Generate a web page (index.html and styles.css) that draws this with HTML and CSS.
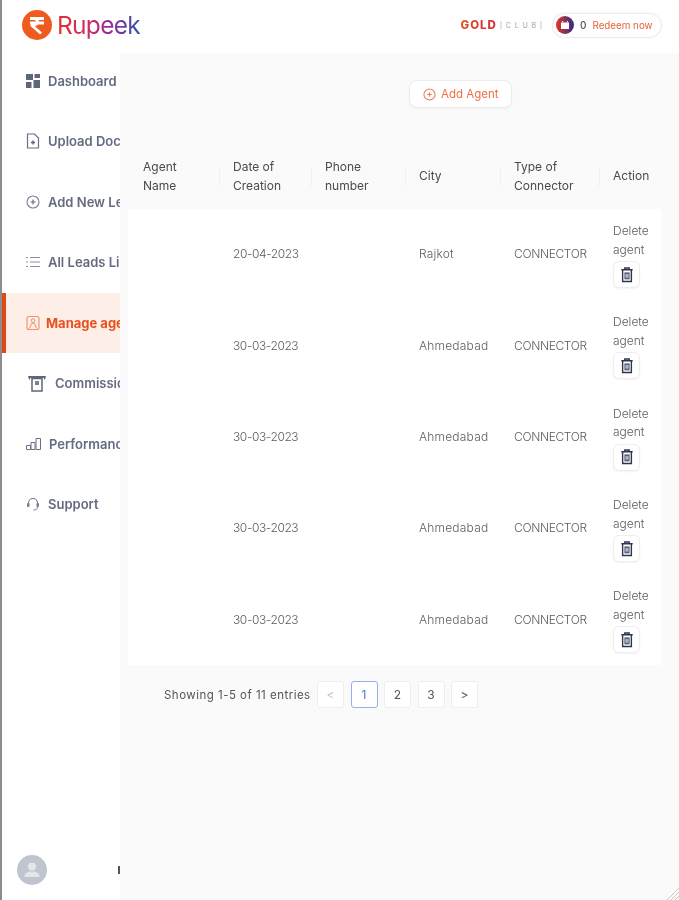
FILE: index.html
```html
<!DOCTYPE html>
<html lang="en">
<head>
<meta charset="utf-8">
<title>Rupeek - Manage agents</title>
<link rel="stylesheet" href="styles.css">
</head>
<body>
<svg class="defs" width="0" height="0" aria-hidden="true">
  <symbol id="trash" viewBox="0 0 16 18">
    <path d="M5.500 2.500V1h5v1.500M1.500 3h13M3 3.500V16.500h10V3.500" fill="none" stroke="#2d3550" stroke-width="1.600"/>
    <path d="M5 6h6v8H5z" fill="#5a6178"/>
    <path d="M7 8v4M9 8v4" stroke="#fff" stroke-width="1"/>
  </symbol>
</svg>
<div class="app">
  <header class="topbar">
    <div class="logo">
      <svg class="logo-mark" viewBox="0 0 30 30" aria-hidden="true">
        <circle cx="15" cy="15" r="15" fill="#ef5a1f"/>
        <path d="M8 8.500h14M8 13h14M10 8.500c7-.5 8 6.500 0 7l9 8" fill="none" stroke="#fff" stroke-width="2.800" stroke-linejoin="round"/>
      </svg>
      <span class="logo-text">Rupeek</span>
    </div>
    <div class="top-right">
      <div class="club"><span class="gold">GOLD</span><span class="club-word">| C L U B |</span></div>
      <div class="redeem">
        <svg class="redeem-icon" viewBox="0 0 18 18" aria-hidden="true">
          <defs><linearGradient id="rg" x1="0" x2="1" y1="0" y2="0"><stop offset="0" stop-color="#e8341f"/><stop offset="1" stop-color="#2a2f8f"/></linearGradient></defs>
          <circle cx="9" cy="9" r="9" fill="url(#rg)"/>
          <path d="M5 6.500h8V13H5z" fill="#fff"/>
          <path d="M7 6.500 6.500 5M11 6.500 11.500 5" stroke="#fff" stroke-width="1"/>
        </svg>
        <span class="points">0</span>
        <span class="redeem-link">Redeem now</span>
      </div>
    </div>
  </header>
  <div class="body-row">
    <nav class="sidebar">
      <ul class="nav">
        <li class="nav-item">
          <svg class="nav-icon" viewBox="0 0 14 14" aria-hidden="true"><path d="M0 0h7v6H0zM8.500 0H14v4H8.500zM0 8h5.500v6H0zM7.500 6H14v8H7.500z" fill="#5f667c"/></svg>
          <span class="nav-label">Dashboard</span>
        </li>
        <li class="nav-item">
          <svg class="nav-icon icon-tall" viewBox="0 0 14 16" aria-hidden="true"><path d="M1.500 1h7l4 4v10h-11z" fill="none" stroke="#6a7085" stroke-width="1.200"/><path d="M5 9.500h4M7 7.500v4" stroke="#5f667c" stroke-width="1.400"/></svg>
          <span class="nav-label">Upload Documents</span>
        </li>
        <li class="nav-item">
          <svg class="nav-icon" viewBox="0 0 14 14" aria-hidden="true"><circle cx="7" cy="7" r="6" fill="none" stroke="#7a8094" stroke-width="1.100"/><path d="M4.500 7h5M7 4.500v5" stroke="#5f667c" stroke-width="1.100"/></svg>
          <span class="nav-label">Add New Lead</span>
        </li>
        <li class="nav-item">
          <svg class="nav-icon" viewBox="0 0 14 12" aria-hidden="true"><path d="M4 1.500h10M4 6h10M4 10.500h10M0 1.500h2M0 6h2M0 10.500h2" stroke="#8a90a2" stroke-width="1.200"/></svg>
          <span class="nav-label">All Leads List</span>
        </li>
        <li class="nav-item is-active">
          <svg class="nav-icon icon-tall" viewBox="0 0 14 15" aria-hidden="true"><rect x="1" y="1" width="12" height="13" rx="2" fill="none" stroke="#f0906c" stroke-width="1.100"/><circle cx="7" cy="5" r="1.800" fill="none" stroke="#f0906c"/><path d="M3.500 13l2-5h3l2 5" fill="none" stroke="#f0906c"/></svg>
          <span class="nav-label">Manage agents</span>
        </li>
        <li class="nav-item">
          <svg class="nav-icon icon-wide" viewBox="0 0 20 17" aria-hidden="true"><path d="M1 1h18l-1 3.500h-1V3H3v1.500H2z" fill="#5f667c"/><path d="M5 3.500h10V16H5z" fill="none" stroke="#5f667c" stroke-width="1.500"/><rect x="8" y="6" width="4" height="4" fill="#7a8094"/></svg>
          <span class="nav-label">Commission</span>
        </li>
        <li class="nav-item">
          <svg class="nav-icon icon-perf" viewBox="0 0 15 12" aria-hidden="true"><path d="M.5 7.500h4v4h-4zM5 4.500h4v7H5zM10 .5h4.500v11H10z" fill="none" stroke="#6a7085"/></svg>
          <span class="nav-label">Performance</span>
        </li>
        <li class="nav-item">
          <svg class="nav-icon" viewBox="0 0 14 14" aria-hidden="true"><path d="M2.500 8V6a4.500 4.500 0 0 1 9 0v2" fill="none" stroke="#7a8094" stroke-width="1.200"/><rect x="1" y="6" width="2.500" height="4" rx="1" fill="#7a8094"/><rect x="10.500" y="6" width="2.500" height="4" rx="1" fill="#7a8094"/><path d="M11.500 10c0 2-2 3-4 3" fill="none" stroke="#7a8094"/></svg>
          <span class="nav-label">Support</span>
        </li>
      </ul>
      <div class="profile">
        <svg class="avatar" viewBox="0 0 30 30" aria-hidden="true"><circle cx="15" cy="15" r="15" fill="#c0c4cf"/><circle cx="15" cy="11.500" r="4" fill="#e4e6eb"/><path d="M7.500 22c0-4 3-5.500 7.500-5.500s7.500 1.500 7.500 5.500z" fill="#e4e6eb"/></svg>
        <span class="profile-mark"></span>
      </div>
    </nav>
    <main class="main">
      <div class="toolbar">
        <button class="add-btn" type="button">
          <svg class="add-icon" viewBox="0 0 14 14" aria-hidden="true"><circle cx="7" cy="7" r="6" fill="none" stroke="#ee7a52" stroke-width="1.100"/><path d="M4.500 7h5M7 4.500v5" stroke="#ee7a52" stroke-width="1.100"/></svg>
          Add Agent
        </button>
      </div>
      <table class="agents">
        <colgroup>
          <col class="c1"><col class="c2"><col class="c3"><col class="c4"><col class="c5"><col class="c6">
        </colgroup>
        <thead>
          <tr>
            <th>Agent<br>Name</th>
            <th><span class="th-sep"></span>Date of<br>Creation</th>
            <th><span class="th-sep"></span>Phone<br>number</th>
            <th><span class="th-sep"></span>City</th>
            <th><span class="th-sep"></span>Type of<br>Connector</th>
            <th><span class="th-sep"></span>Action</th>
          </tr>
        </thead>
        <tbody>
          <tr>
            <td></td><td class="date">20-04-2023</td><td></td><td class="city">Rajkot</td><td class="type">CONNECTOR</td>
            <td class="action">Delete<br>agent<button class="del-btn" type="button" aria-label="Delete agent"><svg class="trash"><use href="#trash"/></svg></button></td>
          </tr>
          <tr>
            <td></td><td class="date">30-03-2023</td><td></td><td class="city">Ahmedabad</td><td class="type">CONNECTOR</td>
            <td class="action">Delete<br>agent<button class="del-btn" type="button" aria-label="Delete agent"><svg class="trash"><use href="#trash"/></svg></button></td>
          </tr>
          <tr>
            <td></td><td class="date">30-03-2023</td><td></td><td class="city">Ahmedabad</td><td class="type">CONNECTOR</td>
            <td class="action">Delete<br>agent<button class="del-btn" type="button" aria-label="Delete agent"><svg class="trash"><use href="#trash"/></svg></button></td>
          </tr>
          <tr>
            <td></td><td class="date">30-03-2023</td><td></td><td class="city">Ahmedabad</td><td class="type">CONNECTOR</td>
            <td class="action">Delete<br>agent<button class="del-btn" type="button" aria-label="Delete agent"><svg class="trash"><use href="#trash"/></svg></button></td>
          </tr>
          <tr>
            <td></td><td class="date">30-03-2023</td><td></td><td class="city">Ahmedabad</td><td class="type">CONNECTOR</td>
            <td class="action">Delete<br>agent<button class="del-btn" type="button" aria-label="Delete agent"><svg class="trash"><use href="#trash"/></svg></button></td>
          </tr>
        </tbody>
      </table>
      <div class="pager">
        <span class="pager-info">Showing 1-5 of 11 entries</span>
        <div class="pages">
          <span class="page is-muted">&lt;</span>
          <span class="page is-current">1</span>
          <span class="page">2</span>
          <span class="page">3</span>
          <span class="page">&gt;</span>
        </div>
      </div>
    </main>
  </div>
  <svg class="resize" viewBox="0 0 12 12" aria-hidden="true"><path d="M12 0 0 12M12 4 4 12M12 8 8 12" stroke="#c9c9c9" stroke-width="1"/></svg>
</div>
</body>
</html>
```

FILE: styles.css
```css
* { box-sizing: border-box; }
html, body { margin: 0; padding: 0; }
body {
  width: 679px;
  height: 900px;
  overflow: hidden;
  background: #fff;
  border-left: 2px solid #8c8c8c;
  font-family: Inter, "Liberation Sans", sans-serif;
  color: #555;
}
.defs { position: absolute; }
.app {
  position: relative;
  display: flex;
  flex-direction: column;
  height: 900px;
  filter: blur(0.6px);
}

/* Top bar */
.topbar {
  flex: 0 0 53px;
  display: flex;
  align-items: center;
  justify-content: space-between;
  padding: 0 17px 3px 20px;
  background: #fff;
}
.logo { display: flex; align-items: center; gap: 5px; }
.logo-mark { width: 30px; height: 30px; }
.logo-text {
  font-size: 24.500px;
  font-weight: 400;
  letter-spacing: -0.7px;
  background: linear-gradient(90deg, #e0322c 0%, #d42a5e 35%, #9a2a9a 62%, #2d55a8 100%);
  -webkit-background-clip: text;
  background-clip: text;
  color: transparent;
}
.top-right { display: flex; align-items: center; gap: 9px; }
.club { display: flex; align-items: center; gap: 3px; }
.gold {
  font-size: 11.500px;
  font-weight: 800;
  letter-spacing: .95px;
  background: linear-gradient(90deg, #e2521f, #d32a3c);
  -webkit-background-clip: text;
  background-clip: text;
  color: transparent;
}
.club-word { font-size: 7px; letter-spacing: .9px; color: #a79db8; white-space: nowrap; }
.redeem {
  display: flex;
  align-items: center;
  width: 110px;
  height: 25px;
  padding: 0 3px;
  border: 1px solid #ececec;
  border-radius: 13px;
  background: #fff;
  box-shadow: 0 0 2px rgba(0, 0, 0, .06);
}
.redeem-icon { width: 18px; height: 18px; }
.points { margin-left: 6px; font-size: 10px; font-weight: 500; color: #555; }
.redeem-link { margin-left: 6px; font-size: 9.800px; color: #e8603a; white-space: nowrap; }

/* Sidebar */
.body-row { flex: 1; display: flex; min-height: 0; }
.sidebar {
  flex: 0 0 118px;
  display: flex;
  flex-direction: column;
  overflow: hidden;
  background: #fff;
}
.nav { margin: -2.500px 0 0; padding: 0; list-style: none; }
.nav-item {
  display: flex;
  align-items: center;
  gap: 8px;
  height: 60.500px;
  padding-left: 24px;
  font-size: 13px;
  font-weight: 600;
  color: #646a80;
  white-space: nowrap;
}
.nav-icon { flex: 0 0 14px; width: 14px; height: 14px; }
.icon-tall { height: 16px; }
.icon-wide { flex-basis: 20px; width: 20px; height: 17px; margin-left: 1px; }
.icon-perf { flex-basis: 15px; width: 15px; height: 12px; }
.is-active {
  padding-left: 20px;
  border-left: 4px solid #e0481a;
  gap: 6px;
  background: #fdeee8;
  color: #e8501e;
  font-weight: 700;
}
.profile {
  display: flex;
  align-items: center;
  justify-content: space-between;
  margin-top: auto;
  padding: 0 0 15px 15px;
}
.avatar { width: 30px; height: 30px; }
.profile-mark { width: 2px; height: 8px; background: #555; }

/* Main */
.main {
  flex: 1;
  min-width: 0;
  padding-left: 8px;
  padding-right: 18px;
  background: #fafafa;
}
.toolbar { padding-top: 27px; padding-left: 281px; }
.add-btn {
  display: flex;
  align-items: center;
  gap: 5px;
  width: 103px;
  height: 28px;
  padding: 0 0 0 13px;
  border: 1px solid #ececec;
  border-radius: 8px;
  background: #fff;
  box-shadow: 0 1px 2px rgba(0, 0, 0, .04);
  font: 400 11.500px Inter, "Liberation Sans", sans-serif;
  color: #ec7148;
}
.add-icon { width: 13px; height: 13px; }
.agents {
  width: 533px;
  margin-top: 49px;
  border-collapse: collapse;
  table-layout: fixed;
  font-size: 12px;
  line-height: 18.500px;
}
.c1 { width: 91px; }
.c2 { width: 92px; }
.c3 { width: 94px; }
.c4 { width: 95px; }
.c5 { width: 99px; }
.c6 { width: 62px; }
.agents th {
  position: relative;
  height: 52px;
  padding: 0 0 13px 14px;
  font-weight: 400;
  text-align: left;
  color: #4a4a4a;
}
.agents th:first-child { padding-left: 15px; }
.th-sep {
  position: absolute;
  left: 0;
  top: 11px;
  height: 18px;
  border-left: 1px solid #f0f0f0;
}
.agents tbody { background: #fff; }
.agents tbody tr { height: 91.300px; }
.agents td {
  padding: 0 0 0 14px;
  font-weight: 300;
  color: #5c5c5c;
  vertical-align: middle;
}
.agents td:first-child { padding-left: 15px; }
.agents .date { letter-spacing: -.4px; }
.agents .city { letter-spacing: .2px; }
.agents .type { letter-spacing: -.35px; }
.agents .action { padding-top: 1px; white-space: nowrap; }
.del-btn {
  display: flex;
  align-items: center;
  justify-content: center;
  width: 27px;
  height: 27px;
  margin-top: 2px;
  padding: 0;
  border: 1px solid #eee;
  border-radius: 6px;
  background: #fff;
  box-shadow: 0 1px 2px rgba(0, 0, 0, .05);
}
.trash { width: 14px; height: 16px; }

/* Pagination */
.pager {
  display: flex;
  align-items: center;
  gap: 7px;
  margin-top: 16px;
  padding-left: 36px;
}
.pager-info { width: 146px; font-size: 11.500px; letter-spacing: .48px; font-weight: 400; color: #555; white-space: nowrap; }
.pages { display: flex; gap: 6.500px; }
.page {
  display: flex;
  align-items: center;
  justify-content: center;
  width: 27px;
  height: 27px;
  border: 1px solid #eee;
  border-radius: 3px;
  background: #fff;
  font-size: 12px;
  color: #555;
}
.is-muted { color: #c4c4c4; }
.is-current { border-color: #8fb2f0; color: #3f7be0; }

/* Window resize grip */
.resize { position: absolute; right: 0; bottom: 0; width: 12px; height: 12px; }
```
